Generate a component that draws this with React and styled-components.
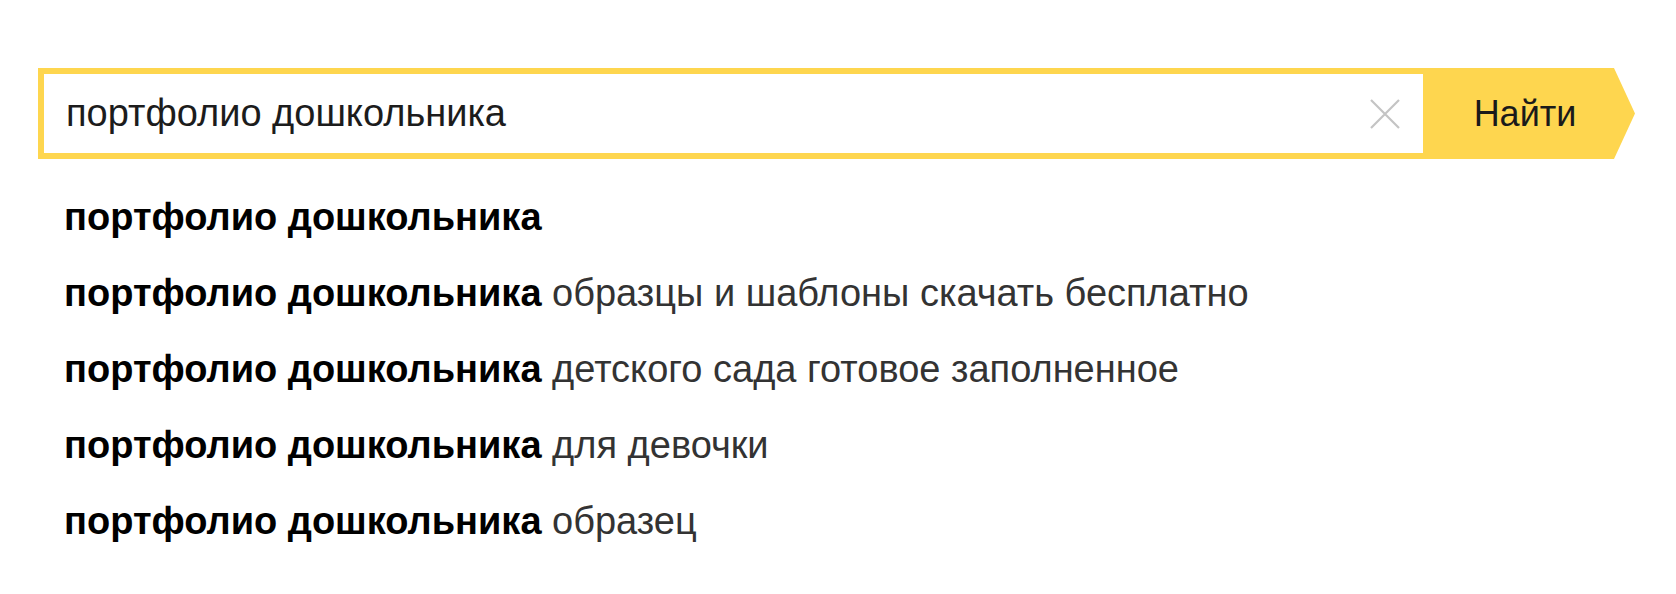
import React from "react";
import styled, { createGlobalStyle } from "styled-components";

const GlobalStyle = createGlobalStyle`
  html, body {
    margin: 0;
    padding: 0;
    background: #ffffff;
  }
  body {
    font-family: "Liberation Sans", Arial, sans-serif;
  }
`;

const Page = styled.div`
  padding: 68px 0 0 38px;
  width: 1676px;
  height: 594px;
  box-sizing: border-box;
`;

const SearchForm = styled.form`
  display: flex;
  align-items: stretch;
  width: 1597px;
  height: 91px;
  background: #fed64f;
  clip-path: polygon(0 0, calc(100% - 21px) 0, 100% 50%, calc(100% - 21px) 100%, 0 100%);
  margin: 0;
`;

const InputWrap = styled.div`
  flex: 1;
  display: flex;
  align-items: center;
  margin: 6px 0 6px 6px;
  background: #ffffff;
  padding: 0 22px 0 22px;
`;

const InputText = styled.div`
  flex: 1;
  font-size: 38px;
  color: #1c1c1c;
  line-height: 1;
  padding-bottom: 1px;
`;

const ClearButton = styled.span`
  display: flex;
  width: 32px;
  height: 32px;
  align-items: center;
  justify-content: center;
`;

const SubmitButton = styled.div`
  width: 212px;
  box-sizing: border-box;
  padding-right: 8px;
  display: flex;
  align-items: center;
  justify-content: center;
  font-size: 36px;
  color: #1a1a1a;
`;

const Suggestions = styled.ul`
  list-style: none;
  margin: 20px 0 0 26px;
  padding: 0;
`;

const Suggestion = styled.li`
  font-size: 38px;
  line-height: 76px;
  color: #333333;
  white-space: nowrap;
`;

const Match = styled.b`
  font-weight: 700;
  color: #000000;
`;

const query = "портфолио дошкольника";
const tails = [
  "",
  "образцы и шаблоны скачать бесплатно",
  "детского сада готовое заполненное",
  "для девочки",
  "образец",
];

export default function App() {
  return (
    <>
      <GlobalStyle />
      <Page>
        <SearchForm onSubmit={(e) => e.preventDefault()}>
          <InputWrap>
            <InputText>{query}</InputText>
            <ClearButton>
              <svg width="32" height="32" viewBox="0 0 32 32">
                <path d="M2 2 L30 30 M30 2 L2 30" stroke="#c4c4c4" strokeWidth="2.2" fill="none" />
              </svg>
            </ClearButton>
          </InputWrap>
          <SubmitButton>Найти</SubmitButton>
        </SearchForm>
        <Suggestions>
          {tails.map((t, i) => (
            <Suggestion key={i}>
              <Match>{query}</Match>
              {t ? " " + t : ""}
            </Suggestion>
          ))}
        </Suggestions>
      </Page>
    </>
  );
}
